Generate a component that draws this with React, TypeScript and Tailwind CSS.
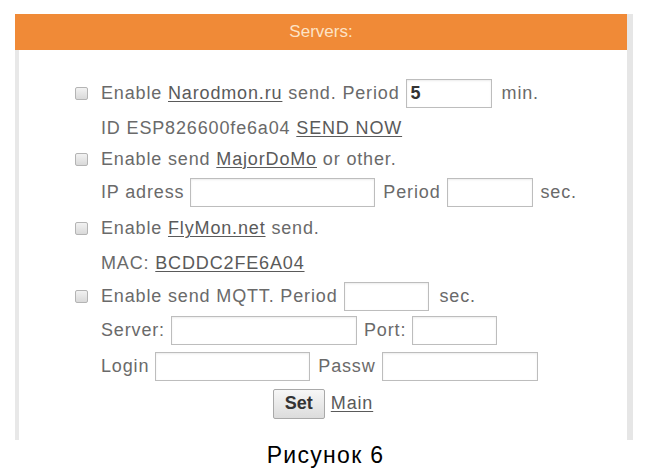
import React from "react";

const font = { fontFamily: '"Liberation Sans", Arial, sans-serif' };

function Box() {
  return (
    <span className="inline-block w-[13px] h-[13px] mr-[13px] rounded-[2px] border border-[#b4b4b4] bg-gradient-to-b from-[#f2f2f2] to-[#d9d9d9] shrink-0" />
  );
}

function Field({ w, value }: { w: string; value?: string }) {
  return (
    <span
      className={`inline-flex items-center h-[29px] ${w} border border-[#bdbdbd] bg-white shadow-[inset_0_1px_2px_rgba(0,0,0,0.08)] px-[4px] text-[#333] font-bold`}
    >
      {value}
    </span>
  );
}

function A({ children }: { children: React.ReactNode }) {
  return <span className="underline decoration-1 underline-offset-2 text-[#5a5a5a]">{children}</span>;
}

export default function App() {
  return (
    <div className="w-[651px] h-[473px] bg-white overflow-hidden" style={font}>
      <div className="pt-[14px] pl-[15px] flex">
        <div className="w-[612px] flex flex-col">
          {/* header */}
          <div className="h-[36px] bg-[#f08a37] flex items-center justify-center text-[17px] text-[#fde3c6]">
            Servers:
          </div>

          {/* body */}
          <div className="h-[390px] border-l-4 border-[#e8e8e8] pt-[26px] text-[18px] tracking-[0.85px] text-[#6a6a6a] flex flex-col">
            <div className="h-[35px] flex items-center pl-[56px] gap-[6px]">
              <Box />
              <span className="-ml-[6px]">
                Enable <A>Narodmon.ru</A> send. Period
              </span>
              <Field w="w-[86px]" value="5" />
              <span className="ml-[4px]">min.</span>
            </div>
            <div className="h-[34px] flex items-center pl-[82px]">
              <span>
                ID ESP826600fe6a04 <A>SEND NOW</A>
              </span>
            </div>
            <div className="h-[29px] flex items-center pl-[56px]">
              <Box />
              <span>
                Enable send <A>MajorDoMo</A> or other.
              </span>
            </div>
            <div className="h-[37px] flex items-center pl-[82px] gap-[6px]">
              <span>IP adress</span>
              <Field w="w-[185px]" />
              <span className="ml-[2px]">Period</span>
              <Field w="w-[86px]" />
              <span className="ml-[2px]">sec.</span>
            </div>
            <div className="h-[35px] flex items-center pl-[56px]">
              <Box />
              <span>
                Enable <A>FlyMon.net</A> send.
              </span>
            </div>
            <div className="h-[34px] flex items-center pl-[82px]">
              <span>
                MAC: <A>BCDDC2FE6A04</A>
              </span>
            </div>
            <div className="h-[33px] flex items-center pl-[56px] gap-[6px]">
              <Box />
              <span className="-ml-[6px]">Enable send MQTT. Period</span>
              <Field w="w-[85px]" />
              <span className="ml-[5px]">sec.</span>
            </div>
            <div className="h-[35px] flex items-center pl-[82px] gap-[6px]">
              <span>Server:</span>
              <Field w="w-[186px]" />
              <span className="ml-[1px]">Port:</span>
              <Field w="w-[85px]" />
            </div>
            <div className="h-[36px] flex items-center pl-[82px] gap-[6px]">
              <span>Login</span>
              <Field w="w-[155px]" />
              <span className="ml-[2px]">Passw</span>
              <Field w="w-[156px]" />
            </div>
            <div className="h-[39px] flex items-center justify-center gap-[6px]">
              <button className="h-[30px] w-[52px] border border-[#a9a9a9] rounded-[2px] bg-gradient-to-b from-[#f7f7f7] to-[#dcdcdc] text-[#333] font-bold text-[18px] tracking-normal">
                Set
              </button>
              <A>Main</A>
            </div>
          </div>
        </div>
        <div className="w-[6px] h-[426px] bg-[#e6e6e6]" />
      </div>

      <div className="text-center text-[23px] tracking-[1.3px] text-black leading-none mt-[4px]">Рисунок 6</div>
    </div>
  );
}
